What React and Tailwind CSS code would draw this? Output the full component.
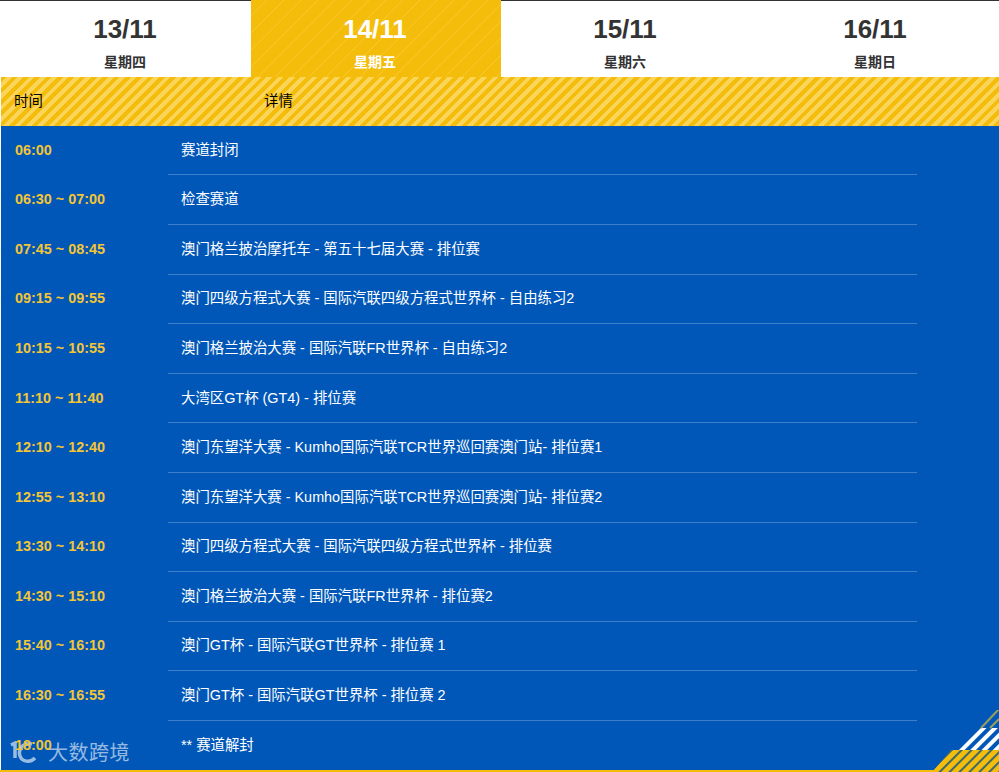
const tabs = [
  ["13/11", "星期四", false],
  ["14/11", "星期五", true],
  ["15/11", "星期六", false],
  ["16/11", "星期日", false],
];
const rows = [
  ["06:00", "赛道封闭"],
  ["06:30 ~ 07:00", "检查赛道"],
  ["07:45 ~ 08:45", "澳门格兰披治摩托车 - 第五十七届大赛 - 排位赛"],
  ["09:15 ~ 09:55", "澳门四级方程式大赛 - 国际汽联四级方程式世界杯 - 自由练习2"],
  ["10:15 ~ 10:55", "澳门格兰披治大赛 - 国际汽联FR世界杯 - 自由练习2"],
  ["11:10 ~ 11:40", "大湾区GT杯 (GT4) - 排位赛"],
  ["12:10 ~ 12:40", "澳门东望洋大赛 - Kumho国际汽联TCR世界巡回赛澳门站- 排位赛1"],
  ["12:55 ~ 13:10", "澳门东望洋大赛 - Kumho国际汽联TCR世界巡回赛澳门站- 排位赛2"],
  ["13:30 ~ 14:10", "澳门四级方程式大赛 - 国际汽联四级方程式世界杯 - 排位赛"],
  ["14:30 ~ 15:10", "澳门格兰披治大赛 - 国际汽联FR世界杯 - 排位赛2"],
  ["15:40 ~ 16:10", "澳门GT杯 - 国际汽联GT世界杯 - 排位赛 1"],
  ["16:30 ~ 16:55", "澳门GT杯 - 国际汽联GT世界杯 - 排位赛 2"],
  ["18:00", "** 赛道解封"],
];
const font = "font-['Liberation_Sans','Noto_Sans_CJK_SC',sans-serif]";

export default function App() {
  return (
    <div className={`relative h-[772px] w-[999px] overflow-hidden bg-white ${font}`}>
      <div className="flex h-[77px] border-t border-[#333333] pl-px">
        {tabs.map(([d, w, active]) => (
          <div
            key={d}
            className={`flex w-[250px] shrink-0 flex-col items-center pr-[2px] ${active ? "-mt-px bg-[#f4bd0b] bg-[repeating-linear-gradient(135deg,transparent_0,transparent_11px,#f7c92f_11px,#f7c92f_12px)] pt-px text-white" : "text-[#333333]"}`}
          >
            <div className="mt-[9px] text-[26px] font-bold leading-[38px]">{d}</div>
            <div className="mt-[4px] text-[14px] font-bold leading-[20px]">{w}</div>
          </div>
        ))}
      </div>
      <div className="ml-px flex h-[48.8px] items-center bg-[#f6c21c] bg-[repeating-linear-gradient(135deg,#f4bd0b_0,#f4bd0b_4px,#fbd45a_4px,#fbd45a_8px)] text-[14.4px] text-black">
        <div className="w-[250px] pl-[13px]">时间</div>
        <div className="pl-[13px]">详情</div>
      </div>
      <div className="ml-px h-[648px] bg-[#0057b8]">
        {rows.map(([t, d], i) => (
          <div key={t} className="relative z-10 flex h-[49.6px]">
            <div className="flex w-[167px] items-center pb-[0.5px] pl-[14px] text-[14.4px] font-bold text-[#f4c534]">{t}</div>
            <div className={`flex w-[749px] items-center border-b pt-[0.5px] pl-[13px] text-[14.4px] text-white ${i < rows.length - 1 ? "border-[#3c7fca]" : "border-transparent"}`}>{d}</div>
          </div>
        ))}
      </div>
      <div className="absolute bottom-0 left-0 right-0 h-[2px] bg-[#f4bd0b]" />
      <svg className="absolute bottom-0 right-0" width="68" height="62" viewBox="0 0 68 62">
        <defs>
          <pattern id="w" width="8" height="8" patternUnits="userSpaceOnUse" patternTransform="rotate(45)">
            <rect width="8" height="8" fill="#0057b8" />
            <rect width="4" height="8" fill="#ffffff" />
          </pattern>
          <pattern id="y" width="7" height="7" patternUnits="userSpaceOnUse" patternTransform="rotate(45)">
            <rect width="7" height="7" fill="#f4bd0b" />
            <rect width="2" height="7" fill="#3f6a68" />
          </pattern>
        </defs>
        <polygon points="25,40 45,18 68,18 68,40" fill="url(#w)" />
        <polygon points="1,62 20,40 68,40 68,62" fill="url(#y)" />
        <path d="M50 18 L68 -1 M59 18 L68 9" stroke="#9a9f5a" strokeWidth="2" fill="none" />
      </svg>
      <div className="pointer-events-none absolute bottom-[5px] left-[10px] flex items-center gap-[12px] text-[#ffffff]/60">
        <svg width="26" height="24" viewBox="0 0 26 24" fill="none" stroke="currentColor">
          <path d="M1 4 L5 2 L5 17" strokeWidth="3.5" />
          <path d="M22 3 C12 1 8 9 10 15 C12 21 20 22 25 17" strokeWidth="3.5" />
        </svg>
        <span className="text-[20px] leading-[28px] tracking-[0.5px]">大数跨境</span>
      </div>
    </div>
  );
}
